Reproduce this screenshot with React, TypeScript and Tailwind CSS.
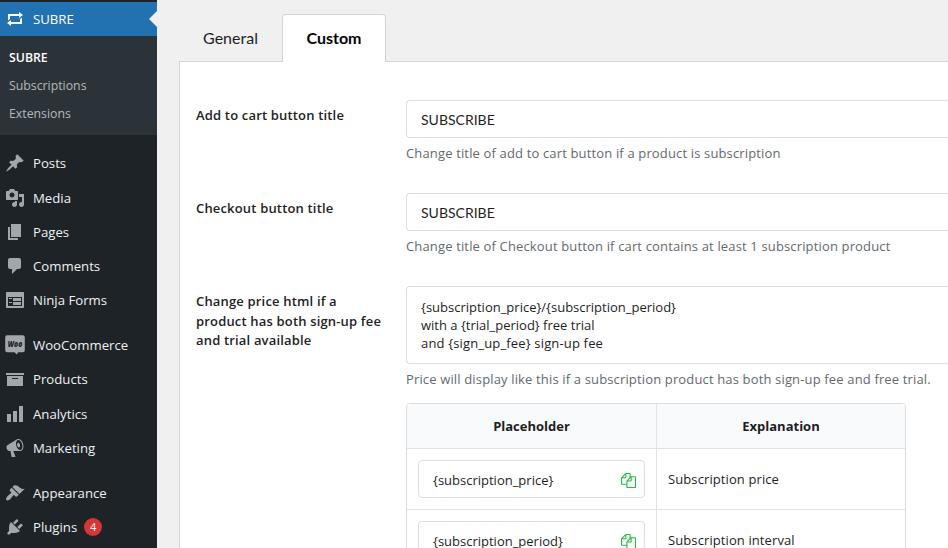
import React from "react";

const PATHS = {
  repeat: "M5 7v3l-2 1.5V5h11V3l4 3.01L14 9V7H5zm10 6v-3l2-1.5V15H6v2l-4-3.01L6 11v2h9z",
  post: "M10.44 3.02l1.82-1.82 6.36 6.35-1.83 1.82c-1.05-.68-2.48-.57-3.41.36l-.75.75c-.92.93-1.04 2.35-.35 3.41l-1.83 1.82-2.41-2.41-2.8 2.79c-.42.42-3.38 2.71-3.8 2.29s1.86-3.39 2.28-3.81l2.79-2.79L4.1 9.36l1.83-1.82c1.05.69 2.48.57 3.4-.36l.75-.75c.93-.92 1.05-2.35.36-3.41z",
  media: "M13 11V4c0-.55-.45-1-1-1h-1.67L9 1H5L3.67 3H2c-.55 0-1 .45-1 1v7c0 .55.45 1 1 1h10c.55 0 1-.45 1-1zM7 4.5c1.38 0 2.5 1.12 2.5 2.5S8.38 9.5 7 9.5 4.5 8.38 4.5 7 5.62 4.5 7 4.5zM14 6h5v10.5c0 1.38-1.12 2.5-2.5 2.5S14 17.88 14 16.5s1.12-2.5 2.5-2.5c.17 0 .34.02.5.05V9h-3V6zm-4 8.05V13h2v3.5c0 1.38-1.12 2.5-2.5 2.5S7 17.88 7 16.5 8.12 14 9.5 14c.17 0 .34.02.5.05z",
  page: "M6 15V2h10v13H6zm-1 1h8v2H3V5h2v11z",
  comments: "M5 2h9c1.1 0 2 .9 2 2v7c0 1.1-.9 2-2 2h-2l-5 5v-5H5c-1.1 0-2-.9-2-2V4c0-1.1.9-2 2-2z",
  forms: "M2 2h16c.55 0 1 .45 1 1v14c0 .55-.45 1-1 1H2c-.55 0-1-.45-1-1V3c0-.55.45-1 1-1zm15 14V7H3v9h14zM4 8v1h3V8H4zm4 0v3h8V8H8zm-4 4v1h3v-1H4zm4 0v3h8v-3H8z",
  archive: "M19 4v2H1V4h18zM2 7h16v10H2V7zm11 3V9H7v1h6z",
  chart: "M18 18V2h-4v16h4zm-6 0V7H8v11h4zm-6 0v-8H2v8h4z",
  megaphone: "M18.15 5.94c.46 1.62.38 3.22-.02 4.48-.42 1.28-1.26 2.18-2.3 2.48-.16.06-.26.06-.4.06-.06.02-.12.02-.18.02-.06.02-.14.02-.22.02h-6.8l2.22 5.5c.02.14-.06.26-.14.34-.08.1-.24.16-.34.16H6.95c-.1 0-.26-.06-.34-.16-.08-.08-.16-.2-.14-.34l-1-5.5H4.25l-.02-.02c-.5.06-1.08-.18-1.54-.62s-.88-1.08-1.06-1.88c-.24-.8-.2-1.56-.02-2.2.18-.62.58-1.08 1.06-1.3l.02-.02 9-5.4c.1-.06.18-.1.24-.16.06-.04.14-.08.24-.12.16-.08.28-.12.5-.18 1.04-.3 2.24.1 3.22.98s1.84 2.24 2.26 3.86zm-2.58 5.98h-.02c.4-.1.74-.34 1.04-.7.58-.7.86-1.76.86-3.04 0-.64-.1-1.3-.28-1.98-.34-1.36-1.02-2.5-1.78-3.24s-1.68-1.1-2.46-.88c-.82.22-1.4.96-1.7 2-.32 1.04-.28 2.36.06 3.72.38 1.36 1 2.5 1.8 3.24.78.74 1.62 1.1 2.48.88zm-2.54-7.08c.22-.04.42-.02.62.04.38.16.76.48 1.02 1s.42 1.2.42 1.78c0 .3-.04.56-.12.8-.18.48-.44.84-.86.94-.34.1-.8-.06-1.14-.4s-.64-.86-.78-1.5c-.18-.62-.12-1.24.02-1.72s.48-.84.82-.94z",
  appearance: "M14.48 11.06L7.41 3.99l1.5-1.5c.5-.56 2.3-.47 3.51.32 1.21.8 1.43 1.28 2.91 2.1 1.18.64 2.45 1.26 4.45.85zm-.71.71L6.7 4.7 4.93 6.47c-.39.39-.39 1.02 0 1.41l1.06 1.06c.39.39.39 1.03 0 1.42-.6.6-1.43 1.11-2.21 1.69-.35.26-.7.53-1.01.84C1.43 14.23.4 16.08 1.4 17.07c.99 1 2.84-.03 4.18-1.36.31-.31.58-.66.85-1.02.57-.78 1.08-1.61 1.69-2.21.39-.39 1.02-.39 1.41 0l1.06 1.06c.39.39 1.02.39 1.41 0z",
  plugins: "M13.11 4.36L9.87 7.6 8 5.73l3.24-3.24c.35-.34 1.05-.2 1.56.32.52.51.66 1.21.31 1.55zm-8 1.77l.91-1.12 9.01 9.01-1.19.84c-.71.71-2.63 1.16-3.82 1.16H6.14L4.9 17.26c-.59.59-1.54.59-2.12 0-.59-.58-.59-1.53 0-2.12l1.24-1.24v-3.88c0-1.13.4-3.19 1.09-3.89zm7.26 3.97l3.24-3.24c.34-.35 1.04-.21 1.55.31.52.51.66 1.21.31 1.55l-3.24 3.25z",
};

type IconName = keyof typeof PATHS;

function MenuIcon({ name, className = "text-[#a2a7ad]" }: { name: IconName; className?: string }) {
  return (
    <svg viewBox="0 0 20 20" className={`ml-[5px] size-5 shrink-0 fill-current ${className}`}>
      <path d={PATHS[name]} />
    </svg>
  );
}

function WooIcon() {
  return (
    <svg viewBox="0 0 20 20" className="ml-[5px] size-5 shrink-0 text-[#a2a7ad]">
      <path
        fill="currentColor"
        d="M2.2 0.2h15.6a2 2 0 0 1 2 2v13a2 2 0 0 1-2 2h-4.6L11.6 19.6 9.6 17.2H2.2a2 2 0 0 1-2-2v-13a2 2 0 0 1 2-2z"
      />
      <text x="10" y="11.6" textAnchor="middle" textLength="14.5" lengthAdjust="spacingAndGlyphs" fontSize="8" fontWeight="800" fontStyle="italic" fontFamily="Open Sans, sans-serif" fill="#1d2327">
        Woo
      </text>
    </svg>
  );
}

function CopyIcon() {
  return (
    <svg viewBox="0 0 1792 1792" className="size-[15px] shrink-0 fill-[#21ba45]">
      <path d="M1696 384q40 0 68 28t28 68v1216q0 40-28 68t-68 28h-960q-40 0-68-28t-28-68v-288h-544q-40 0-68-28t-28-68v-672q0-40 20-88t48-76l408-408q28-28 76-48t88-20h416q40 0 68 28t28 68v328q68-40 128-40h416zm-544 213l-299 299h299v-299zm-640-384l-299 299h299v-299zm196 647l316-316v-416h-384v416q0 40-28 68t-68 28h-416v640h512v-256q0-40 20-88t48-76zm956 804v-1152h-384v416q0 40-28 68t-68 28h-416v640h896z" />
    </svg>
  );
}

function MenuItem({ icon, label, badge }: { icon: IconName | "woo"; label: string; badge?: string }) {
  return (
    <li className="flex h-[34.25px] items-center text-[#f0f0f1]">
      {icon === "woo" ? <WooIcon /> : <MenuIcon name={icon} />}
      <span className="ml-2">{label}</span>
      {badge && (
        <span className="ml-[7px] flex size-[18px] items-center justify-center rounded-full bg-[#d63638] text-[11px] text-white">
          {badge}
        </span>
      )}
    </li>
  );
}

function Sidebar() {
  return (
    <nav className="w-[157px] shrink-0 bg-[#1d2327] pt-[2px] text-[13.2px] leading-[18px]">
      <div className="relative flex h-[34px] items-center bg-[#2271b1] text-white">
        <MenuIcon name="repeat" className="text-white" />
        <span className="ml-2">SUBRE</span>
        <span className="absolute top-[9px] right-0 border-y-8 border-r-8 border-y-transparent border-r-[#f0f0f1]" />
      </div>
      <ul className="h-[99px] bg-[#2c3338] pt-2 pl-[9px] text-[12.3px] text-[#b5b9bc]">
        <li className="flex h-7 items-center font-semibold text-white">SUBRE</li>
        <li className="flex h-7 items-center">Subscriptions</li>
        <li className="flex h-7 items-center">Extensions</li>
      </ul>
      <ul className="pt-[11.2px]">
        <MenuItem icon="post" label="Posts" />
        <MenuItem icon="media" label="Media" />
        <MenuItem icon="page" label="Pages" />
        <MenuItem icon="comments" label="Comments" />
        <MenuItem icon="forms" label="Ninja Forms" />
      </ul>
      <ul className="pt-[10.6px]">
        <MenuItem icon="woo" label="WooCommerce" />
        <MenuItem icon="archive" label="Products" />
        <MenuItem icon="chart" label="Analytics" />
        <MenuItem icon="megaphone" label="Marketing" />
      </ul>
      <ul className="pt-[11px]">
        <MenuItem icon="appearance" label="Appearance" />
        <MenuItem icon="plugins" label="Plugins" badge="4" />
      </ul>
    </nav>
  );
}

function Row({ label, className, children }: { label: React.ReactNode; className: string; children: React.ReactNode }) {
  return (
    <div className={`flex ${className}`}>
      <div className="w-[210px] shrink-0 pt-1.5 text-[13px] leading-[19.5px] font-semibold tracking-[0.17px] text-[#1d2327]">{label}</div>
      <div className="min-w-0 flex-1">{children}</div>
    </div>
  );
}

function Help({ children }: { children: React.ReactNode }) {
  return <p className="pt-[5px] text-[13px] leading-5 tracking-[0.15px] whitespace-nowrap text-[#646970]">{children}</p>;
}

function TextField({ value }: { value: string }) {
  return (
    <div className="flex h-[38px] items-center rounded-l border border-r-0 border-[#dededf] pt-0.5 pl-[14px] font-[Lato,sans-serif] text-sm text-[#1e1e1e]">
      {value}
    </div>
  );
}

function PlaceholderRow({ code, text }: { code: string; text: string }) {
  return (
    <div className="flex h-[61px] border-t border-[#e2e3e4]">
      <div className="flex w-[250px] items-center border-r border-[#e2e3e4] px-[11px]">
        <div className="flex h-[38px] w-[227px] items-center justify-between rounded border border-[#dededf] pt-[3px] pr-2 pl-[14px] text-[13px]">
          <span>{code}</span>
          <CopyIcon />
        </div>
      </div>
      <div className="flex flex-1 items-center pt-0.5 pl-[11px] tracking-[0.1px]">{text}</div>
    </div>
  );
}

export default function App() {
  return (
    <div className="flex h-[548px] w-[948px] overflow-hidden bg-[#f0f0f1] font-['Open_Sans','Noto_Sans',sans-serif]">
      <Sidebar />
      <main className="flex min-w-0 flex-1 flex-col pt-[14px] pl-[22px]">
        <div className="z-10 flex h-12 shrink-0 font-[Lato,sans-serif] text-base text-[#1e1e1e]">
          <div className="flex w-[103px] items-center justify-center pb-px">General</div>
          <div className="flex w-[104px] items-center justify-center rounded-t border border-b-0 border-[#d4d4d5] bg-white pb-px font-bold text-black">
            Custom
          </div>
        </div>
        <section className="-mt-px flex-1 border-t border-l border-[#d4d4d5] bg-white pt-[38px] pl-4">
          <Row label="Add to cart button title" className="h-[93px]">
            <TextField value="SUBSCRIBE" />
            <Help>Change title of add to cart button if a product is subscription</Help>
          </Row>
          <Row label="Checkout button title" className="h-[93px]">
            <TextField value="SUBSCRIBE" />
            <Help>Change title of Checkout button if cart contains at least 1 subscription product</Help>
          </Row>
          <Row
            label={
              <>
                Change price html if a
                <br />
                product has both sign-up fee
                <br />
                and trial available
              </>
            }
            className=""
          >
            <div className="h-[78px] rounded-l border border-r-0 border-[#dededf] pt-[11px] pl-[14px] text-[13px] leading-[18px] text-[#1e1e1e]">
              {"{subscription_price}/{subscription_period}"}
              <br />
              {"with a {trial_period} free trial"}
              <br />
              <span className="tracking-[0.16px]">{"and {sign_up_fee} sign-up fee"}</span>
            </div>
            <Help>Price will display like this if a subscription product has both sign-up fee and free trial.</Help>
            <div className="mt-[14px] w-[500px] overflow-hidden rounded border border-[#dcddde] text-[13px] text-[#1e1e1e]">
              <div className="flex h-11 bg-[#f9fafb] font-bold">
                <div className="flex w-[250px] items-center justify-center border-r border-[#e2e3e4] pt-0.5">Placeholder</div>
                <div className="flex flex-1 items-center justify-center pt-0.5">Explanation</div>
              </div>
              <PlaceholderRow code="{subscription_price}" text="Subscription price" />
              <PlaceholderRow code="{subscription_period}" text="Subscription interval" />
            </div>
          </Row>
        </section>
      </main>
    </div>
  );
}
